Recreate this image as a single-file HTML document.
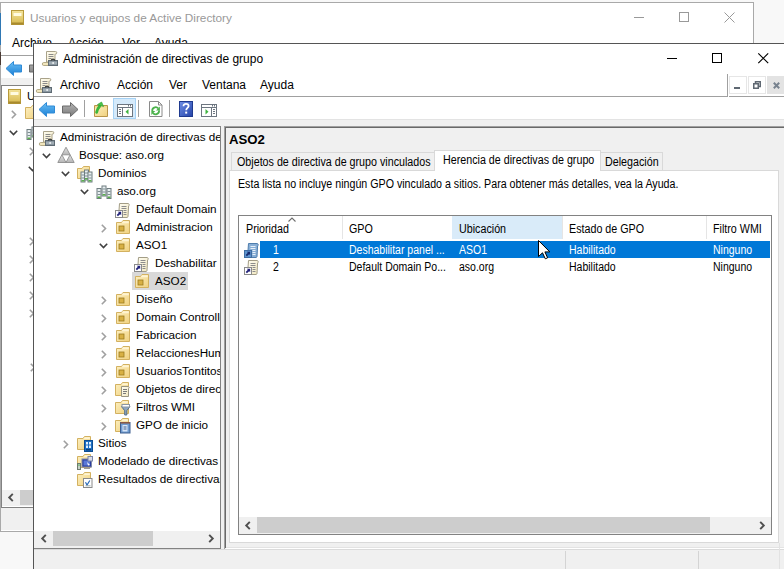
<!DOCTYPE html>
<html><head><meta charset="utf-8">
<style>
*{margin:0;padding:0;box-sizing:border-box}
html,body{width:784px;height:569px;overflow:hidden;background:#f8f8f8;font-family:"Liberation Sans",sans-serif;color:#000}
.a{position:absolute}
.t{position:absolute;white-space:nowrap;line-height:1}
.c{font-size:12px;transform:scaleX(0.875);transform-origin:0 0}
.w{transform:scaleX(0.893)}
svg{position:absolute;overflow:visible}
</style></head><body>

<svg width="0" height="0" style="position:absolute;left:0;top:0">
<defs>
<linearGradient id="gfold" x1="0" y1="0" x2="1" y2="1"><stop offset="0" stop-color="#fdf0c2"/><stop offset="1" stop-color="#f0d17e"/></linearGradient>
<linearGradient id="gscroll" x1="0" y1="0" x2="1" y2="1"><stop offset="0" stop-color="#fffdf2"/><stop offset="1" stop-color="#f1e7c0"/></linearGradient>
<linearGradient id="gblue" x1="0" y1="0" x2="0" y2="1"><stop offset="0" stop-color="#6cc0f5"/><stop offset="1" stop-color="#1a7fd6"/></linearGradient>
<linearGradient id="ggray" x1="0" y1="0" x2="0" y2="1"><stop offset="0" stop-color="#b5b5b5"/><stop offset="1" stop-color="#7a7a7a"/></linearGradient>
<linearGradient id="gtri" x1="0" y1="0" x2="0" y2="1"><stop offset="0" stop-color="#e6e6e6"/><stop offset="1" stop-color="#b4b4b4"/></linearGradient>
<g id="chv"><path d="M0.8 0.8L4.5 4.5L8.2 0.8" fill="none" stroke="#404040" stroke-width="1.6"/></g>
<g id="chr"><path d="M0.8 0.8L4.5 4.5L0.8 8.2" fill="none" stroke="#a0a0a0" stroke-width="1.6"/></g>
<!-- scroll + briefcase -->
<g id="i-gpmc">
 <path d="M4.5 1.5H13.5a1.3 1.3 0 0 1 0 2.6H13V12H4.5Z" fill="url(#gscroll)" stroke="#a9a28a" stroke-width="1"/>
 <path d="M6.5 4.5h5M6.5 6.5h5M6.5 8.5h3" stroke="#8a8a8a" stroke-width="1"/>
 <path d="M1.8 12.5H8.5V15.5H1.8a1.5 1.5 0 0 1 0-3z" fill="#f1e6bd" stroke="#b5ab88" stroke-width="1"/>
 <rect x="6.5" y="10.5" width="9" height="5" fill="#8a97a0" stroke="#5f6b74"/>
 <path d="M9.2 10.5C9.6 8.6 12.4 8.6 12.8 10.5" fill="none" stroke="#2f2f2f" stroke-width="1.2"/>
 <rect x="7" y="12.5" width="8" height="1" fill="#b8c3ca"/>
 <rect x="10.5" y="12" width="1.2" height="2" fill="#fff"/>
</g>
<!-- forest -->
<g id="i-forest">
 <path d="M8 -0.8L12.1 6.8H3.9Z" fill="url(#gtri)" stroke="#8f8f8f" stroke-width="0.9" stroke-linejoin="round"/>
 <path d="M3.9 6.8L8 14.5H-0.2Z" fill="url(#gtri)" stroke="#8f8f8f" stroke-width="0.9" stroke-linejoin="round"/>
 <path d="M12.1 6.8L16.2 14.5H8Z" fill="url(#gtri)" stroke="#8f8f8f" stroke-width="0.9" stroke-linejoin="round"/>
</g>
<!-- folder base -->
<g id="fold">
 <path d="M0.5 2.5H6L7.5 0.5H13.5V13.5H0.5Z" fill="url(#gfold)" stroke="#d3b160" stroke-width="1"/>
 <path d="M7.8 1.3H12.8V3H6.8Z" fill="#fff4d2"/>
</g>
<g id="server">
 <rect x="0.5" y="0.5" width="4" height="10" fill="#e8eef0" stroke="#6f7d80"/>
 <rect x="1" y="3" width="3" height="1" fill="#7e8f92"/>
 <rect x="1" y="6" width="3" height="1" fill="#7e8f92"/>
 <rect x="1" y="8.5" width="3" height="1.5" fill="#59b04a"/>
</g>
<g id="i-domains">
 <path d="M0.5 2.5H5L6.5 0.5H12.5V12.5H0.5Z" fill="url(#gfold)" stroke="#d3b160" stroke-width="1"/>
 <use href="#server" x="3.5" y="5.5"/>
 <use href="#server" x="7" y="3.5"/>
 <use href="#server" x="10.5" y="5.5"/>
</g>
<g id="i-domain">
 <use href="#server" x="0.5" y="4"/>
 <use href="#server" x="5.5" y="1.5"/>
 <use href="#server" x="10.5" y="4"/>
</g>
<g id="i-link">
 <path d="M4.5 1.5h8.5a1.3 1.3 0 0 1 0.6 2.4L13 14.5a1.2 1.2 0 0 1-1 1H3.5z" fill="url(#gscroll)" stroke="#a39d86" stroke-width="1"/>
 <path d="M6.5 4.5h5M6.5 6.5h5M8.5 8.5h3M8.5 10.5h3M8.5 12.5h3" stroke="#8c8c8c" stroke-width="1"/>
 <rect x="0.5" y="8.5" width="7" height="7" fill="#fff" stroke="#8a8a8a"/>
 <path d="M2.3 13.7L5 11" stroke="#23237a" stroke-width="1.8"/>
 <path d="M2.8 9.8H6.2V13.2Z" fill="#23237a"/>
</g>
<g id="i-linksel">
 <path d="M4.5 1.5h8.5a1.3 1.3 0 0 1 0.6 2.4L13 14.5a1.2 1.2 0 0 1-1 1H3.5z" fill="#87aed6" stroke="#4f7eae" stroke-width="1"/>
 <path d="M6.5 4.5h5M6.5 6.5h5M8.5 8.5h3M8.5 10.5h3M8.5 12.5h3" stroke="#e6f0fa" stroke-width="1"/>
 <rect x="0.5" y="8.5" width="7" height="7" fill="#5f95cf" stroke="#3f6ea3"/>
 <path d="M2.3 13.7L5 11" stroke="#152a6e" stroke-width="1.8"/>
 <path d="M2.8 9.8H6.2V13.2Z" fill="#152a6e"/>
</g>
<g id="i-ou">
 <path d="M1.5 2.5H6.5L8 0.5H14.5V13.5H1.5Z" fill="url(#gfold)" stroke="#d3b160" stroke-width="1"/>
 <path d="M7.8 1.3H13.8V3.2H6.8Z" fill="#fff4d2"/>
 <rect x="4" y="6" width="5" height="5" fill="#d8b044" stroke="#9c7b1e" stroke-width="0.8"/>
</g>
<g id="i-objs">
 <use href="#fold"/>
 <path d="M6.5 4.5h6.5a1.1 1.1 0 0 1 0.5 2.1V14.5H6.5z" fill="url(#gscroll)" stroke="#9a9480"/>
 <path d="M8 7.5h4M8 9.5h4M8 11.5h3" stroke="#7a7a7a"/>
</g>
<g id="i-wmi">
 <use href="#fold"/>
 <path d="M6.5 6.5h8.5l-3.2 4.2v4.3h-2.1v-4.3z" fill="#8ea6bf" stroke="#56708c"/>
 <rect x="7" y="4.5" width="7.5" height="2.5" fill="#fff" stroke="#8b97a3"/>
</g>
<g id="i-starter">
 <use href="#fold"/>
 <rect x="5.5" y="4.5" width="9.5" height="10.5" fill="#6f9bd0" stroke="#3e5f8f"/>
 <rect x="5.5" y="4" width="9.5" height="1.6" fill="#8a5a45"/>
 <rect x="7.5" y="7" width="5" height="6.5" fill="#d8e6f7"/>
 <path d="M8.5 9h3M8.5 11h3" stroke="#3e5f8f"/>
</g>
<g id="i-sites">
 <use href="#fold"/>
 <rect x="7.5" y="4.5" width="8" height="11" fill="#1d6fc4" stroke="#0e4d91"/>
 <rect x="9" y="6" width="2" height="2.5" fill="#dff0ff"/><rect x="12" y="6" width="2" height="2.5" fill="#dff0ff"/>
 <rect x="9" y="9.5" width="2" height="2.5" fill="#dff0ff"/><rect x="12" y="9.5" width="2" height="2.5" fill="#dff0ff"/>
 <rect x="9" y="13" width="5" height="1.5" fill="#0b3f7a"/>
</g>
<g id="i-model">
 <use href="#fold"/>
 <rect x="0.5" y="9.5" width="3" height="6" fill="#c7d1c7" stroke="#6d7a6d"/>
 <rect x="1.3" y="10.5" width="1.4" height="1.2" fill="#4caf50"/>
 <rect x="5" y="5" width="9.5" height="8" fill="#2a3c9e" stroke="#7d86a8"/>
 <path d="M6.5 6.5h6.5v5h-6.5z" fill="#5a78d8"/>
 <path d="M10 8l3 3-2 0.5z" fill="#fff"/>
 <path d="M7 14.5h6" stroke="#9a9a9a"/>
 <rect x="11" y="2.5" width="4.5" height="4.5" fill="#d8dce8" stroke="#7d86a8"/>
</g>
<g id="i-results">
 <use href="#fold"/>
 <rect x="6.5" y="6.5" width="8.5" height="9" fill="#fff" stroke="#8a8a8a"/>
 <path d="M8.5 10.2l1.5 2.8 2.8-4.5" fill="none" stroke="#2a6ab8" stroke-width="1.2"/>
 <path d="M8.5 13.8h5" stroke="#9aa"/>
</g>
</defs></svg>

<!-- ============ BACKGROUND WINDOW ============ -->
<div class="a" id="bw" style="left:0;top:2px;width:754px;height:530px;background:#fff;border:1px solid #a9a9a9;overflow:hidden">
</div>
<!-- bw title -->
<div class="t" style="left:30px;top:13px;font-size:11.8px;color:#999">Usuarios y equipos de Active Directory</div>
<!-- bw controls -->
<div class="a" style="left:634px;top:17px;width:10px;height:1px;background:#999"></div>
<div class="a" style="left:679px;top:12px;width:10px;height:10px;border:1px solid #999"></div>
<svg style="left:724px;top:12px" width="11" height="11"><path d="M0.5 0.5L10.5 10.5M10.5 0.5L0.5 10.5" stroke="#999" stroke-width="1"/></svg>
<!-- bw menu -->
<div class="t" style="left:12px;top:37px;font-size:12px">Archivo</div>
<div class="t" style="left:68px;top:37px;font-size:12px">Acción</div>
<div class="t" style="left:122px;top:37px;font-size:12px">Ver</div>
<div class="t" style="left:154px;top:37px;font-size:12px">Ayuda</div>
<div class="a" style="left:1px;top:55px;width:752px;height:1px;background:#a0a0a0"></div>
<!-- bw toolbar band -->
<div class="a" style="left:1px;top:78px;width:752px;height:7px;background:#f0f0f0"></div>
<!-- bw icon -->
<svg style="left:11px;top:10px" width="13" height="16">
 <defs><g id="bwbook"><rect x="0.5" y="0.5" width="12" height="14" fill="url(#gbook)" stroke="#b89a3a"/><rect x="2.5" y="3" width="8" height="3" fill="#fffbe0"/><rect x="0.5" y="12.5" width="12" height="2" fill="#a88a2e"/></g><linearGradient id="gbook" x1="0" y1="0" x2="0" y2="1"><stop offset="0" stop-color="#f3e39a"/><stop offset="1" stop-color="#d7b94e"/></linearGradient></defs>
 <rect x="0.5" y="0.5" width="12" height="14" fill="url(#gbook)" stroke="#b89a3a"/>
 <rect x="2.5" y="3" width="8" height="3" fill="#fffbe0"/>
 <rect x="0.5" y="12.5" width="12" height="2" fill="#a88a2e"/>
</svg>
<!-- bw toolbar arrows -->
<svg style="left:5px;top:61px" width="18" height="16"><path d="M1 7.5L8.5 0.5V4H16.5V11H8.5V14.5Z" fill="url(#gblue)" stroke="#2f8ad6" stroke-width="1" stroke-linejoin="round"/></svg>
<svg style="left:28px;top:61px" width="18" height="16"><path d="M17 7.5L9.5 0.5V4H1.5V11H9.5V14.5Z" fill="url(#ggray)" stroke="#6a6a6a" stroke-width="1" stroke-linejoin="round"/></svg>
<!-- bw tree -->
<div class="a" style="left:1px;top:85px;width:752px;height:423px;background:#fff;border:1px solid #828282"></div>
<svg style="left:8px;top:89px" width="13" height="16"><use href="#bwbook"/></svg>
<div class="t" style="left:27px;top:91px;font-size:11.5px">Usuarios y equipos de Active Directory</div>
<svg style="left:11px;top:110px" width="6" height="10"><use href="#chr"/></svg>
<svg style="left:25px;top:105px" width="16" height="16"><use href="#fold"/></svg>
<svg style="left:9px;top:130px" width="10" height="6"><use href="#chv"/></svg>
<svg style="left:26px;top:125px" width="16" height="16"><use href="#i-domain"/></svg>
<svg style="left:29px;top:147px" width="6" height="10"><use href="#chr"/></svg>
<svg style="left:28px;top:166px" width="10" height="6"><use href="#chv"/></svg>
<svg style="left:29px;top:237px" width="6" height="10"><use href="#chr"/></svg>
<svg style="left:29px;top:255px" width="6" height="10"><use href="#chr"/></svg>
<svg style="left:29px;top:273px" width="6" height="10"><use href="#chr"/></svg>
<svg style="left:29px;top:291px" width="6" height="10"><use href="#chr"/></svg>
<svg style="left:29px;top:309px" width="6" height="10"><use href="#chr"/></svg>
<svg style="left:30px;top:363px" width="6" height="10"><use href="#chr"/></svg>
<!-- bw hscroll -->
<div class="a" style="left:2px;top:490px;width:40px;height:16px;background:#f0f0f0"></div>
<div class="a" style="left:20px;top:490px;width:30px;height:15px;background:#cdcdcd"></div>
<svg style="left:8px;top:493px" width="6" height="9"><path d="M4.8 0.8L1.2 4.5L4.8 8.2" fill="none" stroke="#505050" stroke-width="1.9"/></svg>

<div class="a" style="left:0;top:13px;width:1px;height:32px;background:#2f77b3"></div>
<div class="a" style="left:0;top:52px;width:1px;height:13px;background:#4a3a33"></div>
<!-- bw status -->
<div class="a" style="left:1px;top:507px;width:752px;height:23px;background:#f0f0f0;border-top:1px solid #828282"></div>

<!-- ============ FOREGROUND WINDOW ============ -->
<div class="a" id="fw" style="left:33px;top:43px;width:760px;height:540px;background:#f0f0f0;border:1px solid #555"></div>
<!-- title bar -->
<div class="a" style="left:34px;top:44px;width:750px;height:29px;background:#fff"></div>
<div class="t" style="left:63px;top:53px;font-size:12px">Administración de directivas de grupo</div>
<div class="a" style="left:667px;top:58px;width:10px;height:1px;background:#000"></div>
<div class="a" style="left:712px;top:53px;width:10px;height:10px;border:1px solid #000"></div>
<svg style="left:758px;top:53px" width="11" height="11"><path d="M0.3 0.3L10.2 10.2M10.2 0.3L0.3 10.2" stroke="#000" stroke-width="1.15"/></svg>
<!-- menu bar -->
<div class="a" style="left:34px;top:73px;width:750px;height:24px;background:#fff"></div>
<div class="a" style="left:34px;top:96px;width:694px;height:1px;background:#a0a0a0"></div>
<div class="a" style="left:727px;top:74px;width:1px;height:23px;background:#a0a0a0"></div>
<div class="t" style="left:60px;top:79px;font-size:12px">Archivo</div>
<div class="t" style="left:117px;top:79px;font-size:12px">Acción</div>
<div class="t" style="left:169px;top:79px;font-size:12px">Ver</div>
<div class="t" style="left:202px;top:79px;font-size:12px">Ventana</div>
<div class="t" style="left:260px;top:79px;font-size:12px">Ayuda</div>
<!-- toolbar -->
<div class="a" style="left:34px;top:97px;width:750px;height:22px;background:#fff"></div>
<div class="a" style="left:34px;top:119px;width:750px;height:1px;background:#e3e3e3"></div>

<!-- left tree panel -->
<div class="a" style="left:34px;top:126px;width:187px;height:423px;background:#fff;border:1px solid #828282;border-left:none"></div>

<div class="a" style="left:34px;top:127px;width:186px;height:421px;overflow:hidden">
<div class="a" style="left:-34px;top:-127px;width:784px;height:569px">
<svg style="left:39px;top:130px" width="16" height="16"><use href="#i-gpmc"/></svg>
<div class="t" style="left:60px;top:131px;font-size:11.7px">Administración de directivas de grupo</div>
<svg style="left:42px;top:153px" width="10" height="6"><use href="#chv"/></svg>
<svg style="left:58px;top:148px" width="16" height="16"><use href="#i-forest"/></svg>
<div class="t" style="left:79px;top:149px;font-size:11.7px">Bosque: aso.org</div>
<svg style="left:61px;top:171px" width="10" height="6"><use href="#chv"/></svg>
<svg style="left:77px;top:166px" width="16" height="16"><use href="#i-domains"/></svg>
<div class="t" style="left:98px;top:167px;font-size:11.7px">Dominios</div>
<svg style="left:80px;top:189px" width="10" height="6"><use href="#chv"/></svg>
<svg style="left:96px;top:184px" width="16" height="16"><use href="#i-domain"/></svg>
<div class="t" style="left:117px;top:185px;font-size:11.7px">aso.org</div>
<svg style="left:115px;top:202px" width="16" height="16"><use href="#i-link"/></svg>
<div class="t" style="left:136px;top:203px;font-size:11.7px">Default Domain Policy</div>
<svg style="left:101px;top:224px" width="6" height="10"><use href="#chr"/></svg>
<svg style="left:115px;top:220px" width="16" height="16"><use href="#i-ou"/></svg>
<div class="t" style="left:136px;top:221px;font-size:11.7px">Administracion</div>
<svg style="left:99px;top:243px" width="10" height="6"><use href="#chv"/></svg>
<svg style="left:115px;top:238px" width="16" height="16"><use href="#i-ou"/></svg>
<div class="t" style="left:136px;top:239px;font-size:11.7px">ASO1</div>
<svg style="left:134px;top:256px" width="16" height="16"><use href="#i-link"/></svg>
<div class="t" style="left:155px;top:257px;font-size:11.7px">Deshabilitar panel</div>
<div class="a" style="left:132px;top:272px;width:56px;height:18px;background:#d9d9d9"></div>
<svg style="left:134px;top:274px" width="16" height="16"><use href="#i-ou"/></svg>
<div class="t" style="left:155px;top:275px;font-size:11.7px">ASO2</div>
<svg style="left:101px;top:296px" width="6" height="10"><use href="#chr"/></svg>
<svg style="left:115px;top:292px" width="16" height="16"><use href="#i-ou"/></svg>
<div class="t" style="left:136px;top:293px;font-size:11.7px">Diseño</div>
<svg style="left:101px;top:314px" width="6" height="10"><use href="#chr"/></svg>
<svg style="left:115px;top:310px" width="16" height="16"><use href="#i-ou"/></svg>
<div class="t" style="left:136px;top:311px;font-size:11.7px">Domain Controllers</div>
<svg style="left:101px;top:332px" width="6" height="10"><use href="#chr"/></svg>
<svg style="left:115px;top:328px" width="16" height="16"><use href="#i-ou"/></svg>
<div class="t" style="left:136px;top:329px;font-size:11.7px">Fabricacion</div>
<svg style="left:101px;top:350px" width="6" height="10"><use href="#chr"/></svg>
<svg style="left:115px;top:346px" width="16" height="16"><use href="#i-ou"/></svg>
<div class="t" style="left:136px;top:347px;font-size:11.7px">RelaccionesHumanas</div>
<svg style="left:101px;top:368px" width="6" height="10"><use href="#chr"/></svg>
<svg style="left:115px;top:364px" width="16" height="16"><use href="#i-ou"/></svg>
<div class="t" style="left:136px;top:365px;font-size:11.7px">UsuariosTontitos</div>
<svg style="left:101px;top:386px" width="6" height="10"><use href="#chr"/></svg>
<svg style="left:115px;top:382px" width="16" height="16"><use href="#i-objs"/></svg>
<div class="t" style="left:136px;top:383px;font-size:11.7px">Objetos de directiva de grupo</div>
<svg style="left:101px;top:404px" width="6" height="10"><use href="#chr"/></svg>
<svg style="left:115px;top:400px" width="16" height="16"><use href="#i-wmi"/></svg>
<div class="t" style="left:136px;top:401px;font-size:11.7px">Filtros WMI</div>
<svg style="left:101px;top:422px" width="6" height="10"><use href="#chr"/></svg>
<svg style="left:115px;top:418px" width="16" height="16"><use href="#i-starter"/></svg>
<div class="t" style="left:136px;top:419px;font-size:11.7px">GPO de inicio</div>
<svg style="left:63px;top:440px" width="6" height="10"><use href="#chr"/></svg>
<svg style="left:77px;top:436px" width="16" height="16"><use href="#i-sites"/></svg>
<div class="t" style="left:98px;top:437px;font-size:11.7px">Sitios</div>
<svg style="left:77px;top:454px" width="16" height="16"><use href="#i-model"/></svg>
<div class="t" style="left:98px;top:455px;font-size:11.7px">Modelado de directivas de grupo</div>
<svg style="left:77px;top:472px" width="16" height="16"><use href="#i-results"/></svg>
<div class="t" style="left:98px;top:473px;font-size:11.7px">Resultados de directivas de grupo</div>

</div></div>
<!-- right panel -->
<div class="a" style="left:224px;top:126px;width:560px;height:423px;background:#f0f0f0;border-top:1px solid #a0a0a0;border-left:1px solid #a0a0a0"></div>
<div class="a" style="left:225px;top:127px;width:559px;height:421px;border-top:1px solid #696969;border-left:1px solid #696969"></div>
<div class="t" style="left:229px;top:134px;font-size:12px;font-weight:bold;transform:scaleX(1.1);transform-origin:0 0">ASO2</div>
<!-- tabs -->
<div class="a" style="left:231px;top:152px;width:204px;height:19px;background:#f0f0f0;border:1px solid #d9d9d9;border-bottom:none"></div>
<div class="a" style="left:600px;top:152px;width:63px;height:19px;background:#f0f0f0;border:1px solid #d9d9d9;border-bottom:none"></div>
<div class="a" style="left:229px;top:170px;width:550px;height:373px;background:#fff;border:1px solid #d9d9d9"></div>
<div class="a" style="left:434px;top:150px;width:167px;height:21px;background:#fff;border:1px solid #d9d9d9;border-bottom:none"></div>
<div class="t c w" style="left:237px;top:156px">Objetos de directiva de grupo vinculados</div>
<div class="t c w" style="left:443px;top:154px">Herencia de directivas de grupo</div>
<div class="t c w" style="left:605px;top:156px">Delegación</div>
<div class="t c" style="transform:scaleX(0.889);left:238px;top:178px">Esta lista no incluye ningún GPO vinculado a sitios. Para obtener más detalles, vea la Ayuda.</div>
<!-- list view -->
<div class="a" style="left:238px;top:215px;width:534px;height:320px;background:#fff;border:1px solid #828282"></div>
<div class="a" style="left:452px;top:216px;width:111px;height:23px;background:#d9ebf9"></div>
<div class="a" style="left:342px;top:216px;width:1px;height:23px;background:#e5e5e5"></div>
<div class="a" style="left:562px;top:216px;width:1px;height:23px;background:#e5e5e5"></div>
<div class="a" style="left:706px;top:216px;width:1px;height:23px;background:#e5e5e5"></div>
<svg style="left:288px;top:217px" width="8" height="5"><path d="M0.5 4.5L4 1L7.5 4.5" fill="none" stroke="#6e6e6e" stroke-width="1.1"/></svg>
<div class="t c w" style="left:246px;top:223px">Prioridad</div>
<div class="t c w" style="left:349px;top:223px">GPO</div>
<div class="t c w" style="left:459px;top:223px">Ubicación</div>
<div class="t c w" style="left:569px;top:223px">Estado de GPO</div>
<div class="t c w" style="left:713px;top:223px">Filtro WMI</div>
<div class="a" style="left:260px;top:241px;width:510px;height:17px;background:#0078d7"></div>
<svg style="left:244px;top:242px" width="16" height="16"><use href="#i-linksel"/></svg>
<svg style="left:244px;top:259px" width="16" height="16"><use href="#i-link"/></svg>
<div class="t c" style="left:273px;top:244px;color:#fff">1</div>
<div class="t c" style="left:349px;top:244px;color:#fff">Deshabilitar panel ...</div>
<div class="t c" style="left:459px;top:244px;color:#fff">ASO1</div>
<div class="t c" style="left:569px;top:244px;color:#fff">Habilitado</div>
<div class="t c" style="left:713px;top:244px;color:#fff">Ninguno</div>
<div class="t c" style="left:273px;top:261px">2</div>
<div class="t c" style="left:349px;top:261px">Default Domain Po...</div>
<div class="t c" style="left:459px;top:261px">aso.org</div>
<div class="t c" style="left:569px;top:261px">Habilitado</div>
<div class="t c" style="left:713px;top:261px">Ninguno</div>
<!-- list hscroll -->
<div class="a" style="left:239px;top:517px;width:532px;height:17px;background:#f0f0f0"></div>
<div class="a" style="left:257px;top:517px;width:453px;height:16px;background:#cdcdcd"></div>
<svg style="left:245px;top:521px" width="6" height="9"><path d="M4.8 0.8L1.2 4.5L4.8 8.2" fill="none" stroke="#505050" stroke-width="1.9"/></svg>
<svg style="left:759px;top:521px" width="6" height="9"><path d="M1.2 0.8L4.8 4.5L1.2 8.2" fill="none" stroke="#505050" stroke-width="1.9"/></svg>
<!-- cursor -->
<svg style="left:538px;top:240px" width="13" height="20"><path d="M0.5 0.5V16.5L4.5 12.8L7.3 18.8L9.6 17.8L6.9 11.9H11.8Z" fill="#fff" stroke="#000" stroke-width="1" stroke-linejoin="miter"/></svg>

<!-- FW title icon -->
<svg style="left:42px;top:50px" width="16" height="16"><use href="#i-gpmc"/></svg>
<!-- FW menu icon -->
<svg style="left:36px;top:77px" width="16" height="16"><use href="#i-gpmc"/></svg>
<!-- MDI controls -->
<div class="a" style="left:729px;top:76px;width:18px;height:18px;border:1px solid #e6e6e6"></div>
<div class="a" style="left:748px;top:76px;width:18px;height:18px;border:1px solid #e6e6e6"></div>
<div class="a" style="left:767px;top:76px;width:18px;height:18px;background:#e3e3e3"></div>
<div class="a" style="left:734px;top:87px;width:6px;height:2px;background:#5f6872"></div>
<svg style="left:753px;top:81px" width="8" height="8"><path d="M2.5 2.5V0.75H7.25V5.5H5.5M0.75 2.75H5.25V7.25H0.75Z" fill="none" stroke="#5f6872" stroke-width="1.5"/></svg>
<svg style="left:773px;top:82px" width="7" height="7"><path d="M0.8 0.8L6.2 6.2M6.2 0.8L0.8 6.2" stroke="#77828e" stroke-width="2"/></svg>
<div class="a" style="left:729px;top:96px;width:55px;height:1px;background:#a0a0a0"></div>
<!-- toolbar icons -->
<svg style="left:38px;top:102px" width="18" height="16"><path d="M1 7.5L8.5 0.5V4H16.5V11H8.5V14.5Z" fill="url(#gblue)" stroke="#2f8ad6" stroke-width="1" stroke-linejoin="round"/></svg>
<svg style="left:61px;top:102px" width="18" height="16"><path d="M17 7.5L9.5 0.5V4H1.5V11H9.5V14.5Z" fill="url(#ggray)" stroke="#6a6a6a" stroke-width="1" stroke-linejoin="round"/></svg>
<div class="a" style="left:84px;top:100px;width:1px;height:17px;background:#a0a0a0"></div>
<svg style="left:94px;top:101px" width="16" height="17">
 <path d="M0.5 4.5h13v11h-13z" fill="url(#gfold)" stroke="#b8954a"/>
 <path d="M1 5h12v1.6H1z" fill="#f3d88f"/>
 <path d="M2.6 11.4C3.2 8.8 4.2 6.8 5.8 5" fill="none" stroke="#3cb83c" stroke-width="2.8" stroke-linecap="round"/>
 <path d="M3.4 3.6L7.6 1L9.6 5.6Z" fill="#4ac44a" stroke="#2f9a2f" stroke-width="0.6" stroke-linejoin="round"/>
</svg>
<div class="a" style="left:113px;top:98px;width:23px;height:21px;background:#d5eafb;border:1px solid #a6d2f5"></div>
<svg style="left:117px;top:104px" width="16" height="13">
 <rect x="0.5" y="0.5" width="15" height="12" fill="#fff" stroke="#6d7680"/>
 <path d="M0.5 3.5h15" stroke="#6d7680"/>
 <rect x="11" y="1" width="1" height="1.5" fill="#6d7680"/><rect x="13" y="1" width="1" height="1.5" fill="#6d7680"/>
 <path d="M5.5 3v9.5" stroke="#6d7680"/>
 <path d="M2 5.5h2M2 7.5h2M2 9.5h2" stroke="#6d7680"/>
 <path d="M11.5 5L8.5 7.75L11.5 10.5Z" fill="#3fb33f"/>
</svg>
<div class="a" style="left:138px;top:100px;width:1px;height:17px;background:#a0a0a0"></div>
<svg style="left:149px;top:101px" width="14" height="16">
 <path d="M0.5 0.5h9l3.5 3.5v11.5h-12.5z" fill="#fff" stroke="#8a8a8a"/>
 <path d="M9.5 0.5v3.5h3.5" fill="none" stroke="#8a8a8a"/>
 <path d="M3.3 10.2A3.4 3.4 0 0 1 9.2 7.4" fill="none" stroke="#4cb24c" stroke-width="1.8"/>
 <path d="M10.9 5.6V9.6H7Z" fill="#4cb24c"/>
 <path d="M10 9.3A3.4 3.4 0 0 1 4.1 12.1" fill="none" stroke="#4cb24c" stroke-width="1.8"/>
 <path d="M2.4 13.9V9.9H6.3Z" fill="#4cb24c"/>
</svg>
<div class="a" style="left:169px;top:100px;width:1px;height:17px;background:#a0a0a0"></div>
<svg style="left:179px;top:101px" width="14" height="16">
 <defs><linearGradient id="ghelp" x1="0" y1="0" x2="1" y2="1"><stop offset="0" stop-color="#6f8fe6"/><stop offset="1" stop-color="#2443a8"/></linearGradient></defs>
 <rect x="0.5" y="0.5" width="13" height="15" fill="url(#ghelp)" stroke="#1f3a8f"/>
 <path d="M4.5 5.2C4.5 3.5 5.6 2.8 7 2.8S9.6 3.6 9.6 5C9.6 6.8 7.2 7 7.2 9.2" fill="none" stroke="#fff" stroke-width="1.8"/>
 <rect x="6.2" y="10.6" width="2" height="2" fill="#fff"/>
</svg>
<svg style="left:201px;top:104px" width="16" height="13">
 <rect x="0.5" y="0.5" width="15" height="12" fill="#fff" stroke="#6d7680"/>
 <path d="M0.5 3.5h15" stroke="#6d7680"/>
 <rect x="11" y="1" width="1" height="1.5" fill="#6d7680"/><rect x="13" y="1" width="1" height="1.5" fill="#6d7680"/>
 <path d="M10.5 3v9.5" stroke="#6d7680"/>
 <path d="M12 5.5h2M12 7.5h2M12 9.5h2" stroke="#6d7680"/>
 <path d="M4.5 5L7.5 7.75L4.5 10.5Z" fill="#3fb33f"/>
</svg>
<!-- tree hscroll -->
<div class="a" style="left:34px;top:531px;width:186px;height:17px;background:#f0f0f0"></div>
<div class="a" style="left:53px;top:531px;width:100px;height:15px;background:#cdcdcd"></div>
<svg style="left:41px;top:534px" width="6" height="9"><path d="M4.8 0.8L1.2 4.5L4.8 8.2" fill="none" stroke="#505050" stroke-width="1.9"/></svg>
<svg style="left:208px;top:534px" width="6" height="9"><path d="M1.2 0.8L4.8 4.5L1.2 8.2" fill="none" stroke="#505050" stroke-width="1.9"/></svg>
<!-- status bar -->
<div class="a" style="left:226px;top:547px;width:558px;height:1px;background:#e3e3e3"></div>
<div class="a" style="left:565px;top:551px;width:1px;height:18px;background:#d4d4d4"></div>
<div class="a" style="left:698px;top:551px;width:1px;height:18px;background:#d4d4d4"></div>

<div class="a" style="left:226px;top:548px;width:558px;height:1px;background:#fff"></div>
<div class="a" style="left:34px;top:549px;width:750px;height:1px;background:#dadada"></div>
<div class="a" style="left:779px;top:543px;width:1px;height:26px;background:#e2e2e2"></div>

</body></html>
